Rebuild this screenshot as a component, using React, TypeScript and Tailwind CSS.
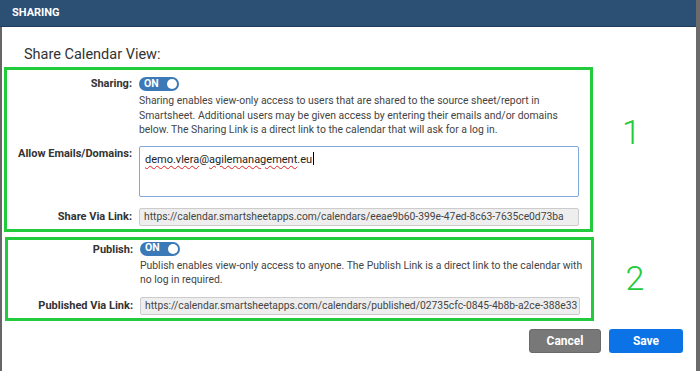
import React from "react";

function Toggle() {
  return (
    <div className="flex h-[14px] w-[40px] items-center justify-between rounded-full bg-[#3b79b7] pl-[5px] pr-[2px]">
      <span className="text-[10.5px] font-bold leading-none text-white">ON</span>
      <span className="h-[10px] w-[10px] rounded-full bg-white" />
    </div>
  );
}

function Label({ children, className = "" }: { children: React.ReactNode; className?: string }) {
  return (
    <div className={"w-[125px] shrink-0 text-right text-[11px] font-bold leading-[14px] text-[#333] " + className}>
      {children}
    </div>
  );
}

export default function App() {
  const font = { fontFamily: "Roboto, 'Noto Sans', Arial, sans-serif" };
  return (
    <div className="flex h-[371px] w-[700px] overflow-hidden bg-white" style={font}>
      <div className="flex w-[696px] flex-col">
        <div className="flex h-[27px] shrink-0 items-center border-b border-[#1d3c5e] bg-[#2c4f74] pl-[12px] text-[11px] font-bold text-white">
          SHARING
        </div>
        <div className="flex flex-1 flex-col border-l-2 border-[#666]">
          <div className="pl-[22px] pt-[19px] text-[14.5px] leading-[18px] text-[#333]">Share Calendar View:</div>
          <div className="mt-[3px] flex">
            <div className="ml-[2px] w-[589px] border-[3px] border-[#22cb3c] pb-[3px] pr-[8px] pt-[7px]">
              <div className="flex gap-[7px]">
                <Label className="pt-0">Sharing:</Label>
                <div className="flex flex-col">
                  <Toggle />
                  <p className="mt-[3px] w-[440px] text-[10.4px] leading-[14.5px] text-[#444]">
                    Sharing enables view-only access to users that are shared to the source sheet/report in Smartsheet. Additional users may be given access by entering their emails and/or domains below. The Sharing Link is a direct link to the calendar that will ask for a log in.
                  </p>
                </div>
              </div>
              <div className="mt-[8px] flex gap-[7px]">
                <Label className="pt-[1px]">Allow Emails/Domains:</Label>
                <div className="h-[51px] w-[440px] rounded-[2px] border border-[#7fa8dc] px-[5px] pt-[3px] text-[11px] leading-[16px] text-[#222]">
                  <span className="underline decoration-[#e02020] decoration-wavy decoration-1 underline-offset-2">demo.vlera</span>
                  <span>@</span>
                  <span className="underline decoration-[#e02020] decoration-wavy decoration-1 underline-offset-2">agilemanagement</span>
                  <span>.eu</span>
                  <span className="ml-[1px] inline-block h-[13px] w-px translate-y-[2px] bg-black" />
                </div>
              </div>
              <div className="mt-[11px] flex items-center gap-[7px]">
                <Label>Share Via Link:</Label>
                <div className="flex h-[18px] w-[440px] items-center overflow-hidden whitespace-nowrap rounded-[2px] border border-[#ccc] bg-[#eee] pl-[4px] text-[10.3px] text-[#444]">
                  https://calendar.smartsheetapps.com/calendars/eeae9b60-399e-47ed-8c63-7635ce0d73ba
                </div>
              </div>
            </div>
            <div className="flex flex-1 justify-center pr-[26px] pt-[48px] text-[34px] font-light leading-[34px] text-[#22cb3c]">1</div>
          </div>
          <div className="mt-[5px] flex">
            <div className="ml-[3px] w-[589px] border-[3px] border-[#22cb3c] pb-[3px] pr-[8px] pt-[2px]">
              <div className="flex gap-[7px]">
                <Label className="pt-[1px]">Publish:</Label>
                <div className="flex flex-col">
                  <Toggle />
                  <p className="mt-[3px] w-[443px] text-[10.4px] leading-[14.5px] text-[#444]">
                    Publish enables view-only access to anyone. The Publish Link is a direct link to the calendar with
                    <br />
                    no log in required.
                  </p>
                </div>
              </div>
              <div className="mt-[9px] flex items-center gap-[7px]">
                <Label>Published Via Link:</Label>
                <div className="flex h-[18px] w-[440px] items-center overflow-hidden whitespace-nowrap rounded-[2px] border border-[#ccc] bg-[#eee] pl-[4px] text-[10.3px] text-[#444]">
                  https://calendar.smartsheetapps.com/calendars/published/02735cfc-0845-4b8b-a2ce-388e33
                </div>
              </div>
            </div>
            <div className="flex flex-1 justify-center pr-[20px] pt-[24px] text-[34px] font-light leading-[34px] text-[#22cb3c]">2</div>
          </div>
          <div className="mt-[8px] flex justify-end gap-[8px] pr-[13px]">
            <button className="h-[24px] w-[72px] rounded-[3px] border border-[#6a6a6a] bg-[#787878] text-[12px] font-bold text-white">Cancel</button>
            <button className="h-[24px] w-[74px] rounded-[3px] bg-[#0b73e6] text-[12px] font-bold text-white">Save</button>
          </div>
        </div>
      </div>
      <div className="w-[4px] bg-[#6b6b6b]" />
    </div>
  );
}
